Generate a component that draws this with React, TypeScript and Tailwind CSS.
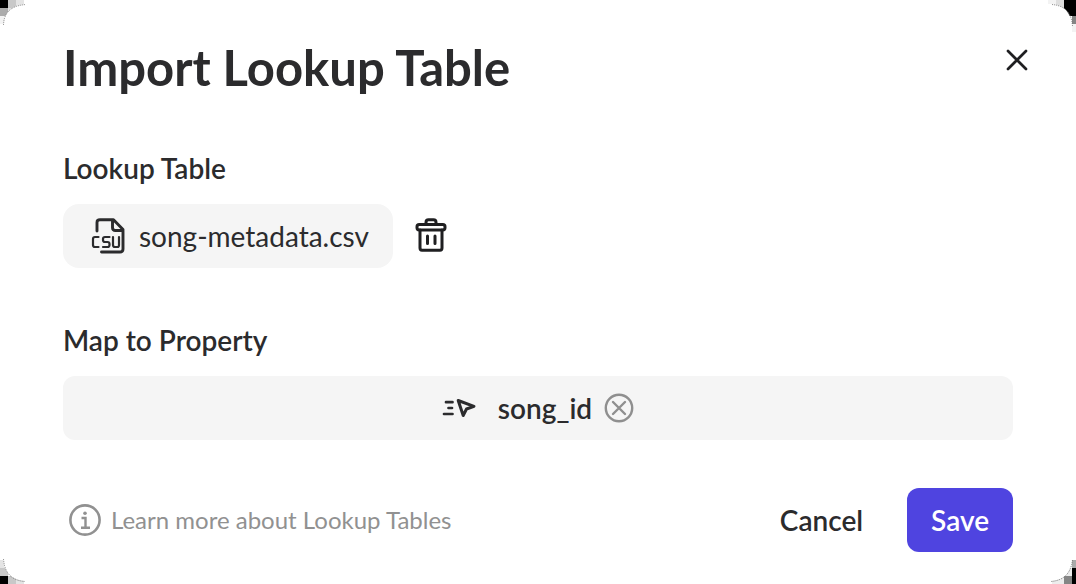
import type { ReactNode } from "react";

function CloseIcon() {
  return (
    <svg width="24" height="24" viewBox="0 0 24 24" fill="none" stroke="currentColor" strokeWidth="2.7" strokeLinecap="round" aria-hidden="true">
      <path d="M3 3l18 18M21 3L3 21" />
    </svg>
  );
}

function CsvIcon() {
  return (
    <svg width="36" height="36" viewBox="0 0 36 36" fill="none" stroke="currentColor" strokeLinecap="round" strokeLinejoin="round" aria-hidden="true">
      <path strokeWidth="2.9" d="M6 13V4.500Q6 1.800 9 1.800H22.500L32 11.500V31Q32 34 29 34H10.500M21.500 2.500V9.500Q21.500 12.500 24.500 12.500H32" />
      <path strokeWidth="2.200" d="M7.500 19H4Q2 19 2 21V27Q2 29 4 29H7.500M18.500 19H14Q12 19 12 21V22Q12 24 14 24H16.500Q18.500 24 18.500 26V27Q18.500 29 16.500 29H12M22 19V27Q22 29 24 29H26.500Q28 29 28 27V19" />
    </svg>
  );
}

function TrashIcon() {
  return (
    <svg width="32" height="36" viewBox="0 0 32 36" fill="none" stroke="currentColor" strokeWidth="3" strokeLinecap="round" strokeLinejoin="round" aria-hidden="true">
      <rect x="2" y="6.500" width="28" height="5.500" rx="2.200" />
      <path d="M11 6V4.500Q11 1.800 13.500 1.800H18.500Q21 1.800 21 4.500V6M5 12V30Q5 32.200 7 32.200H25Q27 32.200 27 30V12" />
      <path d="M12.500 18V25.500M20 18V25.500" />
    </svg>
  );
}

function EventIcon() {
  return (
    <svg width="34" height="20" viewBox="0 0 34 20" fill="none" stroke="currentColor" strokeWidth="2.700" strokeLinecap="round" strokeLinejoin="round" aria-hidden="true">
      <path d="M4 4.200H10.500M6.500 10H10M2 16H10.500" />
      <path strokeWidth="3" d="M16.200 2.500L32 8.300L24.500 11L21.200 17.500Z" />
    </svg>
  );
}

function ClearIcon() {
  return (
    <svg width="30" height="30" viewBox="0 0 30 30" fill="none" stroke="currentColor" strokeWidth="2.4" strokeLinecap="round" aria-hidden="true">
      <circle cx="15" cy="15" r="13.200" />
      <path d="M9 9l12 12M21 9l-12 12" />
    </svg>
  );
}

function InfoIcon() {
  return (
    <svg width="32" height="32" viewBox="0 0 32 32" fill="none" stroke="currentColor" strokeWidth="2.600" aria-hidden="true">
      <circle cx="16" cy="16" r="14.600" />
      <path strokeWidth="2.400" d="M12.500 14H16.500V23.500M12 23.700H21" />
      <circle cx="16" cy="9.200" r="1.800" fill="currentColor" stroke="none" />
    </svg>
  );
}

function Corner({ place, children }: { place: string; children: ReactNode }) {
  return (
    <svg className={`pointer-events-none absolute ${place}`} width="32" height="32" viewBox="0 0 32 32" aria-hidden="true">
      {children}
    </svg>
  );
}

function DialogCorners() {
  return (
    <>
      <Corner place="left-0 top-0">
        <path fill="#000" d="M0 0h8v8H0z" />
        <path fill="#c8c8c8" d="M8 0h8v8H8z" />
        <path fill="#e4e4e4" d="M16 0h8v8h-8zM8 8h8v8H8z" />
        <path fill="#acacac" d="M0 8h8v8H0z" />
        <path fill="#f3f3f3" d="M0 16h4v8H0z" />
        <path fill="#fff" d="M3 32V26Q4 5 27 4H32V32Z" />
        <path fill="none" stroke="#777" strokeDasharray="1 1" d="M3.500 25Q4 6 26 4.500" />
      </Corner>
      <Corner place="right-0 top-0">
        <path fill="#000" d="M20 0h12v16H20z" />
        <path fill="#dedede" d="M12 0h8v8h-8z" />
        <path fill="#f3f3f3" d="M4 0h8v8H4zM28 24h4v8h-4z" />
        <path fill="#858585" d="M28 16h4v8h-4z" />
        <path fill="#fff" d="M0 4H7Q27 5 28 27V32H0Z" />
        <path fill="none" stroke="#777" strokeDasharray="1 1" d="M8 4.500Q27 6 28.500 26" />
      </Corner>
      <Corner place="bottom-0 left-0">
        <path fill="#000" d="M0 24h8v8H0z" />
        <path fill="#c8c8c8" d="M8 24h8v8H8zM0 16h8v8H0z" />
        <path fill="#e4e4e4" d="M16 24h8v8h-8zM0 8h4v8H0z" />
        <path fill="#fff" d="M3 0V6Q4 28 26 29H32V0Z" />
        <path fill="none" stroke="#777" strokeDasharray="1 1" d="M3.500 7Q5 28 25 29.500" />
      </Corner>
      <Corner place="bottom-0 right-0">
        <path fill="#ededed" d="M8 24h12v8H8zM20 16h8v8h-8z" />
        <path fill="#858585" d="M20 24h8v8h-8z" />
        <path fill="#aaa" d="M28 8h4v8h-4z" />
        <path fill="#000" d="M28 16h4v16h-4z" />
        <path fill="#fff" d="M28 0V7Q27 28 6 29H0V0Z" />
        <path fill="none" stroke="#777" strokeDasharray="1 1" d="M28.500 8Q26 28 7 29.500" />
      </Corner>
    </>
  );
}

export default function App() {
  return (
    <main
      role="dialog"
      aria-labelledby="dialog-title"
      className="relative flex min-h-screen flex-col bg-white px-[63px] py-8 font-['Lato',sans-serif] text-[#2b2b2d]"
    >
      <DialogCorners />
      <header className="flex items-start justify-between">
        <h1 id="dialog-title" className="text-[49px] leading-[70px] font-bold">Import Lookup Table</h1>
        <button type="button" aria-label="Close" className="-mr-8 p-4 text-[#1f1f21]">
          <CloseIcon />
        </button>
      </header>

      <section className="mt-[50px]">
        <h2 className="text-[28px] leading-8 font-semibold">Lookup Table</h2>
        <div className="mt-5 flex items-center gap-[22px]">
          <div className="flex h-16 items-center gap-3 rounded-2xl bg-[#f5f5f5] pr-6 pl-7">
            <CsvIcon />
            <span className="text-[28px] leading-8">song-metadata.csv</span>
          </div>
          <button type="button" aria-label="Remove file" className="text-[#1f1f21]">
            <TrashIcon />
          </button>
        </div>
      </section>

      <section className="mt-14">
        <h2 className="text-[28px] leading-8 font-semibold">Map to Property</h2>
        <div className="mt-5 flex h-16 items-center justify-center rounded-xl bg-[#f5f5f5]">
          <EventIcon />
          <span className="ml-[22px] text-[28px] leading-8 font-semibold">song_id</span>
          <button type="button" aria-label="Clear property" className="ml-3 text-[#8f8f8f]">
            <ClearIcon />
          </button>
        </div>
      </section>

      <footer className="mt-12 flex items-center justify-between">
        <a href="#learn-more" className="flex items-center gap-[10px] pl-[6px] text-2xl text-[#919191]">
          <InfoIcon />
          Learn more about Lookup Tables
        </a>
        <div className="flex items-center gap-5">
          <button type="button" className="h-16 px-6 text-[28px] font-semibold">Cancel</button>
          <button type="button" className="h-16 rounded-xl bg-[#4f44e0] px-6 text-[28px] font-semibold text-white">Save</button>
        </div>
      </footer>
    </main>
  );
}
